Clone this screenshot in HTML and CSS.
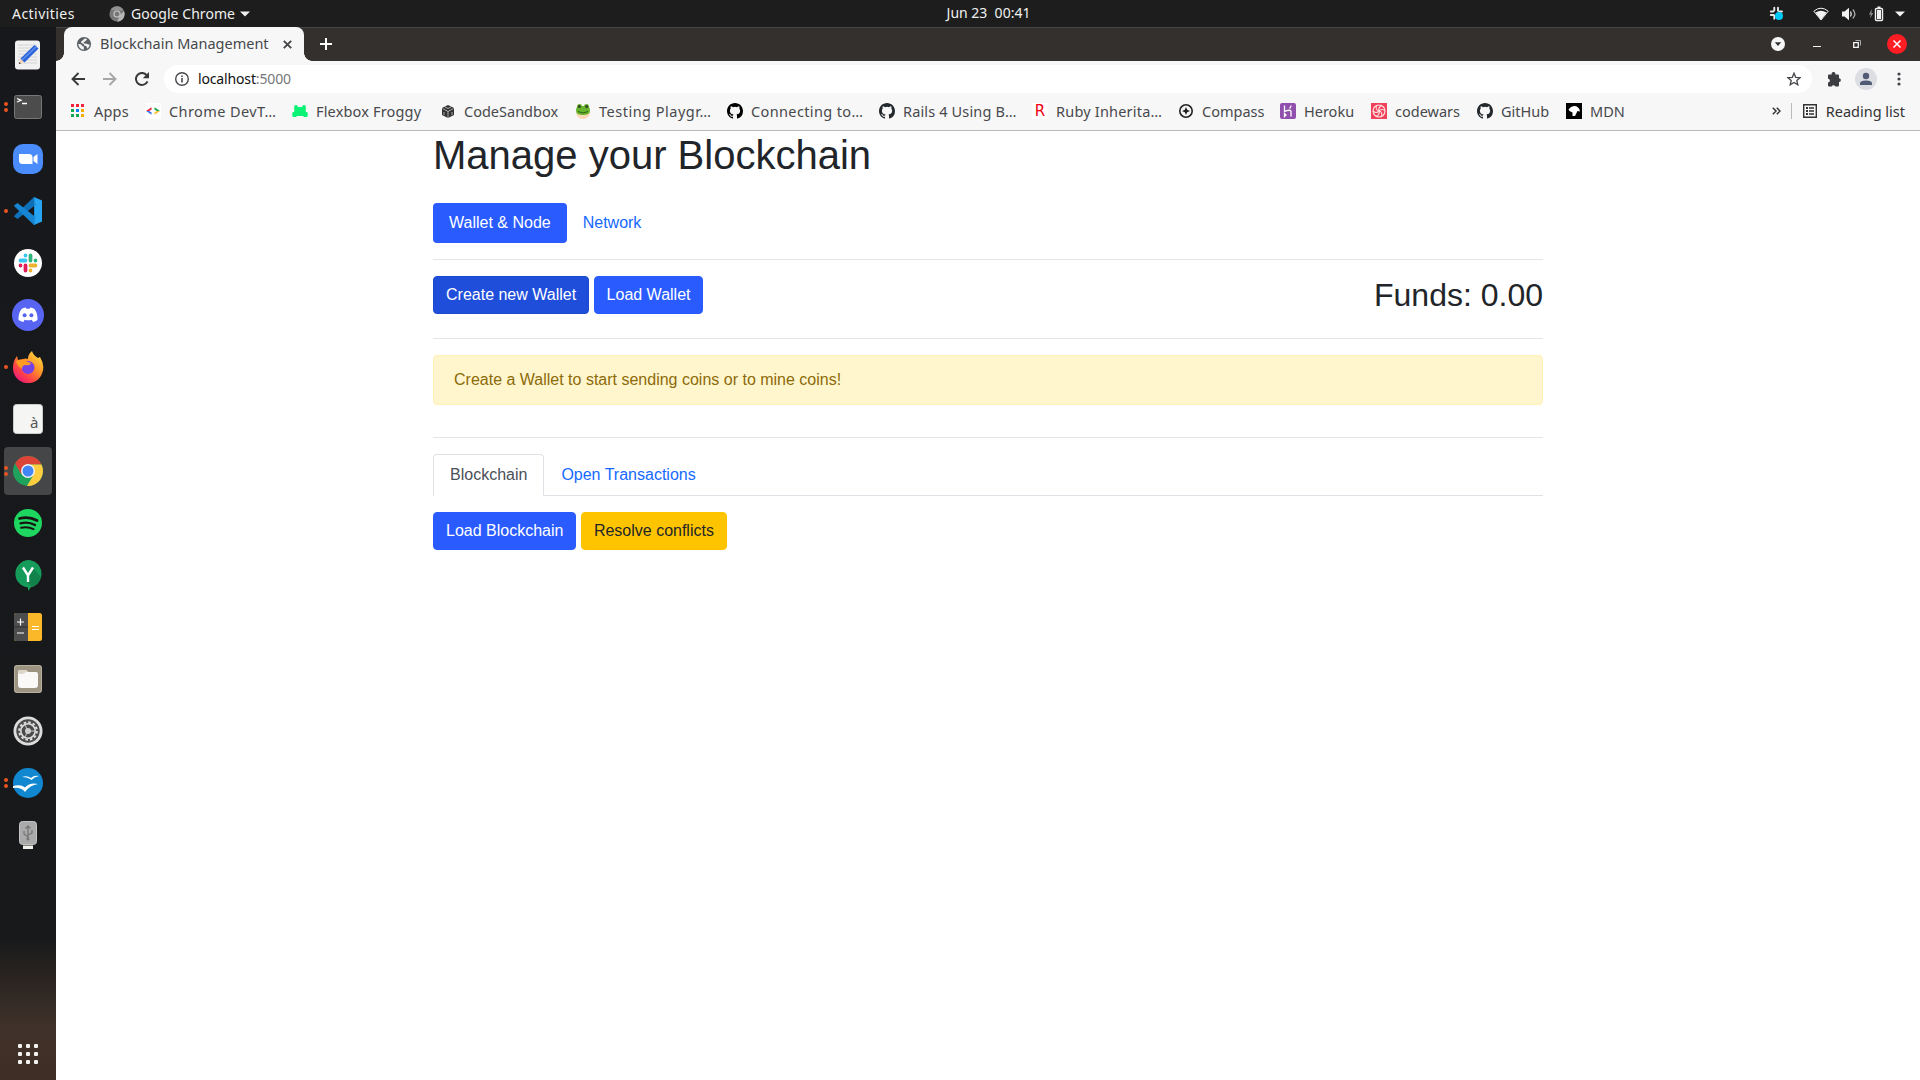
FILE: index.html
```html
<!DOCTYPE html>
<html lang="en">
<head>
<meta charset="utf-8">
<title>Blockchain Management</title>
<link rel="stylesheet" href="styles.css">
</head>
<body>
<svg width="0" height="0" class="defs">
  <symbol id="octocat" viewBox="0 0 16 16"><path d="M8 0C3.58 0 0 3.58 0 8c0 3.54 2.29 6.53 5.47 7.59.4.07.55-.17.55-.38 0-.19-.01-.82-.01-1.49-2.01.37-2.53-.49-2.69-.94-.09-.23-.48-.94-.82-1.13-.28-.15-.68-.52-.01-.53.63-.01 1.08.58 1.23.82.72 1.21 1.87.87 2.33.66.07-.52.28-.87.51-1.07-1.78-.2-3.64-.89-3.64-3.95 0-.87.31-1.59.82-2.15-.08-.2-.36-1.02.08-2.12 0 0 .67-.21 2.2.82a7.6 7.6 0 0 1 4 0c1.53-1.04 2.2-.82 2.2-.82.44 1.1.16 1.92.08 2.12.51.56.82 1.27.82 2.15 0 3.07-1.87 3.75-3.65 3.95.29.25.54.73.54 1.48 0 1.07-.01 1.93-.01 2.2 0 .21.15.46.55.38A8.01 8.01 0 0 0 16 8c0-4.42-3.58-8-8-8z"/></symbol>
</svg>
<header class="topbar">
  <span class="activities">Activities</span>
  <span class="appmenu">
    <svg width="16" height="16" viewBox="0 0 16 16"><circle cx="8" cy="8" r="7.6" fill="#777"/><path d="M1.5 4A7.6 7.6 0 0 1 14.8 4.600H8z" fill="#909090"/><path d="M15 5A7.600 7.600 0 0 1 8 15.600L11.200 9z" fill="#b5b5b5"/><circle cx="8" cy="8" r="3.600" fill="#ccc"/><circle cx="8" cy="8" r="2.500" fill="#777"/></svg>
    <span class="appname">Google Chrome</span>
    <svg width="10" height="6" viewBox="0 0 10 6"><path d="M0 .5h10L5 5.500z" fill="#f2f2f2"/></svg>
  </span>
  <span class="clock">Jun 23&nbsp; 00:41</span>
  <span class="tray">
    <svg class="t-slack" width="15" height="15" viewBox="0 0 15 15"><g stroke="#e8e8e8" stroke-width="1.900" stroke-linecap="round"><path d="M5.300 1.800v2.700M1.800 5.500h2.500M9 1.800v3M10.500 5.500H13M1.800 9h3M5.300 9.800v3"/></g><circle cx="10" cy="10" r="4" fill="#00c8f8"/></svg>
    <svg class="t-wifi" width="16" height="14" viewBox="0 0 16 14"><path d="M.8 4.200Q8-1.800 15.200 4.200L8 13z" fill="none" stroke="#f2f2f2"/><path d="M2.500 5.500Q8 2 13.500 5.500L8 13z" fill="#f2f2f2"/></svg>
    <svg class="t-vol" width="16" height="14" viewBox="0 0 16 14"><path d="M1 4.500h2.500L8 .8v12.400L3.500 9.500H1z" fill="#f2f2f2"/><path d="M9.500 4.500q1.600 2.500 0 5" stroke="#f2f2f2" stroke-width="1.300" fill="none"/><path d="M11.800 2.500q4.200 4.500 0 9" stroke="#aaa" stroke-width="1.300" fill="none"/></svg>
    <svg class="t-bat" width="15" height="16" viewBox="0 0 15 16"><path d="M2.800 3L0 8.500h1.800L1 12.500 4.300 7H2.500z" fill="#8a8a8a"/><rect x="6.500" y="2.500" width="7" height="12" rx="1" fill="none" stroke="#f2f2f2" stroke-width="1.400"/><path d="M8 4h4v9H8zM8.500 .5h3v2h-3z" fill="#f2f2f2"/></svg>
    <svg width="10" height="6" viewBox="0 0 10 6"><path d="M0 .5h10L5 5.500z" fill="#f2f2f2"/></svg>
  </span>
</header>
<div class="desktop">
<nav class="dock">
  <div class="app"><svg viewBox="0 0 32 32"><rect x="3" y="1.500" width="25" height="29" rx="3" fill="#f1f1f1"/><path d="M6 6h19M6 9h19M6 12h19M6 15h19M6 18h19M6 21h19M6 24h19" stroke="#d4d4d4"/><path d="M7 25l1.500-6 4 4z" fill="#f6d4b2"/><path d="M7 25l.5-2 1.400 1.400z" fill="#222"/><path d="M8.500 19.500L22.500 6l4 3.500L12.500 23.500z" fill="#2b63d9"/><path d="M10 21L24.500 7.500" stroke="#6390ee" stroke-width="1.500"/></svg></div>
  <div class="app two"><svg viewBox="0 0 32 32"><rect x="2.500" y="4.500" width="27" height="23" rx="2" fill="#4c4c4c" stroke="#777"/><path d="M5 7.500l4 1.800L5 11M10 12.500h5" stroke="#fff" stroke-width="1.300" fill="none"/></svg></div>
  <div class="app"><svg viewBox="0 0 32 32"><rect x="1" y="1" width="30" height="30" rx="10" fill="#4a8cfb"/><path d="M7 11h10q3.500 0 3.500 3.500V21h-10Q7 21 7 17.500zM21.500 14l4-3v10l-4-3z" fill="#fff"/></svg></div>
  <div class="app one"><svg viewBox="0 0 32 32"><path d="M22 2l8 3.500v21L22 30z" fill="#27a4f2"/><path d="M22 2L3 20l-1 1.500L5.500 24 23.500 10z" fill="#0e70b8"/><path d="M22 30L3 12l-1-1.500L5.500 8l18 14z" fill="#1685d2"/><path d="M22 2h1v28h-1z" fill="#1b8ed8"/></svg></div>
  <div class="app"><svg viewBox="0 0 32 32"><circle cx="16" cy="16" r="14" fill="#fff"/><g stroke-width="3.800" stroke-linecap="round" fill="none"><path d="M13.500 8.500v0M8.500 13.500h5" stroke="#36c5f0"/><path d="M18.500 8.500v5M23.500 13.500v0" stroke="#2eb67d"/><path d="M18.500 18.500h5M18.500 23.500v0" stroke="#ecb22e"/><path d="M13.500 18.500v5M8.500 18.500v0" stroke="#e01e5a"/></g></svg></div>
  <div class="app"><svg viewBox="0 0 32 32"><circle cx="16" cy="16" r="16" fill="#5865f2"/><path d="M9.500 10q2-1.300 4.200-1.500l.7 1.200h3.200l.7-1.200q2.200.2 4.200 1.500 3.500 5 3 11-2 1.600-4.500 2l-1.200-2.200q-3.600 1-7.200 0L11.400 23Q9 22.600 6.500 21 6 15 9.500 10z" fill="#fff"/><circle cx="12.600" cy="16.300" r="2" fill="#5865f2"/><circle cx="19.400" cy="16.300" r="2" fill="#5865f2"/></svg></div>
  <div class="app one"><svg viewBox="0 0 32 32"><defs><linearGradient id="fox" x1="1" y1="0" x2=".2" y2="1"><stop offset="0" stop-color="#fff04a"/><stop offset=".45" stop-color="#ff9328"/><stop offset=".75" stop-color="#ff4048"/><stop offset="1" stop-color="#ea1580"/></linearGradient></defs><path d="M20 0q1 4 6 7l2-1q5 8 2.500 15A15 15 0 0 1 1 17Q1 10 5 5l1 4 5-1q3-1 5 0 0-5 4-8z" fill="url(#fox)"/><circle cx="16" cy="16.500" r="6.500" fill="#7542e5"/><path d="M4 10q6-3 12 1l3 1q-1 3-5 2-4 0-4 4Q5 15 4 10z" fill="#ff9a24"/></svg></div>
  <div class="app"><svg viewBox="0 0 32 32"><rect x="1.500" y="1.500" width="29" height="29" rx="3" fill="#f5f5f4" stroke="#ccc"/><text x="18" y="25" class="glyph-a">à</text></svg></div>
  <div class="app two active"><svg viewBox="0 0 32 32"><circle cx="16" cy="16" r="15" fill="#1ea25c"/><path d="M3 8.500A15 15 0 0 1 29.500 9.500H16l-6.500 10z" fill="#dc4437"/><path d="M29.500 9.500A15 15 0 0 1 15 31l7-12-3-9.500z" fill="#ffcd40"/><circle cx="16" cy="16" r="7" fill="#f1f1f1"/><circle cx="16" cy="16" r="5.500" fill="#4285f4"/></svg></div>
  <div class="app"><svg viewBox="0 0 32 32"><circle cx="16" cy="16" r="14" fill="#1ed760"/><g fill="none" stroke="#191414" stroke-linecap="round"><path d="M7.500 11.500q9.500-2.500 17.500 2" stroke-width="2.800"/><path d="M8.500 16.300q8-2 14.500 1.800" stroke-width="2.300"/><path d="M9 20.700q7-1.500 12.500 1.500" stroke-width="1.900"/></g></svg></div>
  <div class="app"><svg viewBox="0 0 32 32"><path d="M16 1a13.800 13.800 0 0 1 3 27.200L16 32v-3.500A13.800 13.800 0 0 1 16 1z" fill="#169c5a"/><path d="M21 9l8 9q-2 7-9 10l-6-6z" fill="#11834a"/><path d="M11 8.500l5 8 5-8M16 16v7" stroke="#fff" stroke-width="2.400" fill="none"/></svg></div>
  <div class="app"><svg viewBox="0 0 32 32"><rect x="2" y="2" width="28" height="28" rx="2.500" fill="#fbb829"/><path d="M16 2v28H4.500Q2 30 2 27.500v-23Q2 2 4.500 2z" fill="#4d4d4d"/><path d="M2 16h14" stroke="#333"/><path d="M5 11h7M8.500 7.500v7M5 22h7M20 15.500h7M20 18.500h7" stroke="#fff" stroke-width="1.200"/></svg></div>
  <div class="app"><svg viewBox="0 0 32 32"><rect x="2" y="2" width="28" height="28" rx="3" fill="#9d9481"/><rect x="2.500" y="2.500" width="27" height="27" rx="3" fill="none" stroke="#bab29f"/><path d="M6 9q0-2 2-2h6l2 2h8q2 0 2 2v11q0 3-3 3H9q-3 0-3-3z" fill="#faf9f7"/><path d="M6.500 10.500q3 1 5 0l3-1.500H16l-2-2H8q-2 0-2 2z" fill="#ddd7c9"/></svg></div>
  <div class="app"><svg viewBox="0 0 32 32"><circle cx="16" cy="16" r="14.500" fill="#ddd"/><circle cx="16" cy="16" r="11.700" fill="#4a4a4a"/><circle cx="16" cy="16" r="8.800" fill="none" stroke="#ddd" stroke-width="2" stroke-dasharray="2.600 2"/><circle cx="16" cy="16" r="7.200" fill="none" stroke="#ddd" stroke-width="1.600"/><circle cx="16" cy="16" r="3" fill="#ccc"/><path d="M16 16l-3-6M16 16h6.500M16 16l-3 6" stroke="#ccc"/></svg></div>
  <div class="app two"><svg viewBox="0 0 32 32"><circle cx="16" cy="16" r="15" fill="#1187d0"/><path d="M10 10q5-2 9 1 3-3 8-2-5 1-7.500 4Q16 10 10 10zM1 19q8-2 12 1.500Q18 15 26 17q-8 1-13 8-4-5-12-4z" fill="#fff"/></svg></div>
  <div class="app"><svg viewBox="0 0 32 32"><rect x="7.500" y="2.500" width="17" height="23" rx="3" fill="#aaa" stroke="#c4c4c4"/><path d="M11 26.500h10V30H11z" fill="#f0f0ec"/><path d="M16 20V8M13.500 9.500L16 7l2.500 2.500M16 18l-4-3v-3M16 16l4-2v-3" stroke="#777" stroke-width="1.300" fill="none"/><circle cx="16" cy="20" r="1.600" fill="#777"/></svg></div>
  <div class="launcher"><i></i><i></i><i></i><i></i><i></i><i></i><i></i><i></i><i></i></div>
</nav>
<main class="browser">
  <div class="titlebar">
    <div class="tab">
      <svg width="16" height="16" viewBox="0 0 16 16"><circle cx="8" cy="8" r="7.100" fill="#5c6066"/><path d="M2.200 8l2.500.2q1.300.5 1.300 1.800l1.800.6v3.100Q2.800 13.200 2.200 8zM8.500 2.500l2.500.6q-.2 1.500-1.500 1.700-.3 1.200-1.800 1.300-.5 1.300.5 1.500l2.800.2q.8 1.200 2 .6l.8.200q-.6 2.800-2.300 4-.6-.1-.7-1.700-.4-1.200-2-1.200-1-.4-1-1.500L5 6.500q0-1.500 1.600-1.900z" fill="#f3f3f3"/></svg>
      <span class="tab-title">Blockchain Management</span>
      <svg width="9" height="9" viewBox="0 0 9 9"><path d="M.8.800l7.400 7.400M8.200.800L.8 8.200" stroke="#45474a" stroke-width="1.900"/></svg>
    </div>
    <svg class="plus" width="12" height="12" viewBox="0 0 12 12"><path d="M6 0v12M0 6h12" stroke="#fff" stroke-width="2"/></svg>
    <div class="winctl">
      <svg width="14" height="14" viewBox="0 0 14 14"><circle cx="7" cy="7" r="7" fill="#f7f7f7"/><path d="M3.800 5.200h6.400L7 9z" fill="#33302e"/></svg>
      <svg width="8" height="14" viewBox="0 0 8 14"><path d="M0 9.500h8" stroke="#f5f5f5"/></svg>
      <svg width="8" height="8" viewBox="0 0 8 8"><path d="M.7 2.700h4.600v4.600H.7z" stroke="#f5f5f5" stroke-width="1.300" fill="none"/><path d="M2.500.5h5v5" stroke="#aaa" fill="none"/></svg>
      <svg width="20" height="20" viewBox="0 0 20 20"><circle cx="10" cy="10" r="10" fill="#ff1d24"/><path d="M6.500 6.500l7 7M13.500 6.500l-7 7" stroke="#fff" stroke-width="1.500"/></svg>
    </div>
  </div>
  <div class="toolbar">
    <svg width="14" height="14" viewBox="0 0 14 14"><path d="M14 7H1.500M7.500 1L1.500 7l6 6" stroke="#38393b" stroke-width="1.900" fill="none"/></svg>
    <svg width="14" height="14" viewBox="0 0 14 14"><path d="M0 7h12.500M6.500 1l6 6-6 6" stroke="#a5a6a8" stroke-width="1.900" fill="none"/></svg>
    <svg width="14" height="14" viewBox="0 0 14 14"><path d="M12.500 9.300A6 6 0 1 1 11.500 3" stroke="#38393b" stroke-width="2" fill="none"/><path d="M14 0v6.200H7.800z" fill="#38393b"/></svg>
    <div class="omnibox">
      <svg width="14" height="14" viewBox="0 0 14 14"><circle cx="7" cy="7" r="6.300" stroke="#48494c" stroke-width="1.400" fill="none"/><path d="M6.200 6h1.600v4.500H6.200zM6.200 3.500h1.600v1.500H6.200z" fill="#48494c"/></svg>
      <span class="url">localhost<em>:5000</em></span>
      <svg width="14" height="14" viewBox="0 0 14 14"><path d="M7 1.200l1.700 4.100 4.500.3-3.400 2.900 1 4.300L7 10.500l-3.800 2.300 1-4.300L.8 5.600l4.500-.3z" stroke="#45464a" stroke-width="1.300" fill="none"/></svg>
    </div>
    <svg class="puzzle" width="15" height="15" viewBox="0 0 15 15"><path d="M1 3.500Q1 2.500 2 2.500h2.700a1.900 1.900 0 1 1 3.600 0H11q1 0 1 1v2.700a1.900 1.900 0 1 1 0 3.800v3q0 1.500-1 1.500H8.300a1.900 1.900 0 0 0-3.600 0H2q-1 0-1-1v-3a1.900 1.900 0 0 0 0-3.800z" fill="#3c3d40"/></svg>
    <svg class="avatar" width="22" height="22" viewBox="0 0 22 22"><circle cx="11" cy="11" r="11" fill="#dddee4"/><circle cx="11" cy="8" r="3.200" fill="#515b73"/><path d="M5 17v-1.500q0-3 6-3t6 3V17z" fill="#515b73"/></svg>
    <svg class="kebab" width="4" height="14" viewBox="0 0 4 14"><g fill="#45464a"><circle cx="2" cy="2" r="1.600"/><circle cx="2" cy="7" r="1.600"/><circle cx="2" cy="12" r="1.600"/></g></svg>
  </div>
  <div class="bookmarks">
    <span class="bm w-apps"><svg viewBox="0 0 16 16"><path d="M1 1h3v3H1zM6 1h3v3H6zM11 1h3v3h-3z" fill="#f3233c"/><path d="M1 6h3v3H1zM1 11h3v3H1z" fill="#14a752"/><path d="M6 6h3v3H6z" fill="#1680f5"/><path d="M11 6h3v3h-3zM6 11h3v3H6zM11 11h3v3h-3z" fill="#f7aa00"/><path d="M6 11h3v3H6z" fill="#14a752"/></svg>Apps</span>
    <span class="bm w-dev"><svg viewBox="0 0 16 16"><rect width="16" height="16" rx="2" fill="#fff"/><path d="M6.500 4.200v2.600L4 8 1 8z" fill="#f3233c"/><path d="M1 8h3l2.500 1.200v2.600z" fill="#3b78f5"/><path d="M9.500 4.200v2.600L12 8h3z" fill="#14a752"/><path d="M15 8h-3L9.500 9.200v2.600z" fill="#fbc02d"/></svg>Chrome DevT…</span>
    <span class="bm w-frog"><svg viewBox="0 0 16 16"><g fill="#0cf277"><circle cx="4" cy="4" r="1.900"/><circle cx="12" cy="4" r="1.900"/><rect x="2.200" y="4" width="11.600" height="9" rx="1.500"/><rect x=".3" y="9" width="4.500" height="5" rx="1.200"/><rect x="11.200" y="9" width="4.500" height="5" rx="1.200"/></g></svg>Flexbox Froggy</span>
    <span class="bm w-csb"><svg viewBox="0 0 16 16"><path d="M8 2l6 3v7l-6 3-6-3V5z" fill="#333"/><path d="M2.500 5.500L8 8.500l5.500-3M8 8.500V15M5 4l3 1.500L11 4M4 9v3M12 9v3" stroke="#ccc" stroke-width=".8" fill="none"/></svg>CodeSandbox</span>
    <span class="bm w-test"><svg viewBox="0 0 16 16"><path d="M1 10h14q-1.500 6-7 6t-7-6z" fill="#fbd9b8"/><path d="M1 8q0-3 1-4 0-3 2.500-3T7 3h2q0-2 2.500-2T14 4q1 1 1 4 0 4-7 4T1 8z" fill="#66b52c"/><circle cx="4.300" cy="3.500" r="1.500" fill="#342"/><circle cx="11.700" cy="3.500" r="1.500" fill="#342"/><path d="M3 8.500q5 3 10 0" stroke="#345d18" fill="none"/></svg>Testing Playgr…</span>
    <span class="bm w-conn"><svg><use href="#octocat"/></svg>Connecting to…</span>
    <span class="bm w-rails slate"><svg><use href="#octocat"/></svg>Rails 4 Using B…</span>
    <span class="bm w-ruby"><span class="ruby-icon">R</span>Ruby Inherita…</span>
    <span class="bm w-comp"><svg viewBox="0 0 16 16"><circle cx="8" cy="8" r="6.200" fill="none" stroke="#222" stroke-width="1.600"/><path d="M8 4l1.200 2.800L12 8 9.200 9.200 8 12 6.800 9.200 4 8l2.800-1.200z" fill="#222"/></svg>Compass</span>
    <span class="bm w-hero"><svg viewBox="0 0 16 16"><rect width="16" height="16" rx="2" fill="#9150ad"/><path d="M4.500 2.500v6q6.500-2.500 6.500 0v5M4.500 10.500v3l1.500-1.500zM11 2.500q0 1.500-1.500 3" stroke="#fff" stroke-width="1.300" fill="none"/></svg>Heroku</span>
    <span class="bm w-wars"><svg viewBox="0 0 16 16"><rect width="16" height="16" fill="#f0415a"/><g fill="none" stroke="#ffe3e3" stroke-width="1.100"><circle cx="8" cy="8" r="6"/><path d="M8 8Q7 4 11 2.500M8 8q3-3 6 0M8 8q4 1 2.500 5.500M8 8q1 4-3 5.500M8 8q-3 3-6 0M8 8Q4 7 5.500 2.500"/></g></svg>codewars</span>
    <span class="bm w-gh slate"><svg><use href="#octocat"/></svg>GitHub</span>
    <span class="bm w-mdn"><svg viewBox="0 0 16 16"><rect width="16" height="16" fill="#000"/><path d="M2.500 6.500L5 4l3-1q5 0 6 5.500l-2.500-.5-1 2L9 13H6.500V9.500L3.500 8z" fill="#fff"/></svg>MDN</span>
    <svg class="more" width="9" height="8" viewBox="0 0 9 8"><path d="M.8.800L4 4 .8 7.200M4.800.800L8 4 4.800 7.200" stroke="#333" stroke-width="1.500" fill="none"/></svg>
    <span class="reading"><svg width="14" height="14" viewBox="0 0 14 14"><path d="M.7.700h12.600v12.600H.7z" stroke="#333" stroke-width="1.400" fill="none"/><path d="M3 3h2v2H3zM3 6h2v2H3zM3 9h2v2H3zM6 3.300h5v1.400H6zM6 6.300h5v1.400H6zM6 9.300h5v1.400H6z" fill="#333"/></svg>Reading list</span>
  </div>
  <section class="page">
    <div class="container">
      <h1>Manage your Blockchain</h1>
      <div class="pills"><a class="pill on">Wallet &amp; Node</a><a class="pill">Network</a></div>
      <hr>
      <div class="row">
        <div><button class="btn pressed">Create new Wallet</button> <button class="btn">Load Wallet</button></div>
        <h2>Funds: 0.00</h2>
      </div>
      <hr>
      <div class="alert">Create a Wallet to start sending coins or to mine coins!</div>
      <hr>
      <div class="tabs"><a class="navtab on">Blockchain</a><a class="navtab">Open Transactions</a></div>
      <div><button class="btn">Load Blockchain</button> <button class="btn warning">Resolve conflicts</button></div>
    </div>
  </section>
</main>
</div>
</body>
</html>
```
FILE: styles.css
```css
* { box-sizing: border-box; }
body { margin: 0; height: 1080px; overflow: hidden; display: flex; flex-direction: column; font: 14.5px/20px "Noto Sans", sans-serif; background: #fff; }
svg { display: block; flex: none; }
.defs { position: absolute; }

/* System bar */
.topbar { height: 27px; flex: none; background: #1d1d1d; color: #f0f0f0; display: grid; grid-template-columns: 1fr auto 1fr; grid-template-rows: 27px; align-items: center; padding: 0 15px 0 12px; font-size: 14px; }
.topbar > * { grid-row: 1; }
.activities { grid-column: 1; letter-spacing: .45px; }
.appmenu { grid-column: 1; margin-left: 97px; display: flex; align-items: center; }
.appname { margin: 0 5px 0 6px; width: 104px; white-space: nowrap; letter-spacing: .05px; }
.clock { grid-column: 2; font-size: 14px; margin: -1px 0 0 60px; }
.tray { grid-column: 3; display: flex; align-items: center; justify-content: flex-end; }
.t-slack { margin-right: 29px; }
.t-wifi { margin-right: 12px; }
.t-vol { margin-right: 12px; }
.t-bat { margin-right: 11px; }

.desktop { flex: 1; display: flex; min-height: 0; }

/* Dock */
.dock { width: 56px; flex: none; padding: 4px 4px 0; display: flex; flex-direction: column; gap: 4px; background: linear-gradient(#17181b 0, #18191b 910px, #302823 965px, #40312a 1000px, #3e2e25 100%); }
.app { position: relative; width: 48px; height: 48px; border-radius: 4px; display: flex; align-items: center; justify-content: center; }
.app svg { width: 32px; height: 32px; }
.app.active { background: #454648; }
.app.one::before, .app.two::before { content: ""; position: absolute; left: 0; width: 4px; height: 4px; border-radius: 50%; background: #e95420; top: 22px; }
.app.two::before { top: 19px; box-shadow: 0 6px #e95420; }
.glyph-a { font: 15px "Noto Sans", sans-serif; fill: #555; }
.launcher { margin: auto auto 16px; display: grid; grid-template-columns: repeat(3, 4px); gap: 4px; }
.launcher i { width: 4px; height: 4px; border-radius: 1px; background: #f2f2f0; }

/* Window frame */
.browser { flex: 1; min-width: 0; display: flex; flex-direction: column; }
.titlebar { height: 34px; flex: none; padding-left: 8px; display: flex; align-items: center; background: #33302e; border-top: 1px solid #474543; }
.tab { position: relative; width: 240px; height: 34px; margin-top: -1px; padding: 0 12px; display: flex; align-items: center; background: #f7f7f7; border-radius: 8px 8px 0 0; color: #46484b; }
.tab::before, .tab::after { content: ""; position: absolute; bottom: 0; width: 8px; height: 8px; }
.tab::before { left: -8px; background: radial-gradient(circle at 0 0, #33302e 7.500px, #f7f7f7 8px); }
.tab::after { right: -8px; background: radial-gradient(circle at 100% 0, #33302e 7.500px, #f7f7f7 8px); }
.tab-title { width: 183px; margin: -2px 0 0 8px; white-space: nowrap; flex: none; }
.plus { margin: -1px 0 0 16px; }
.winctl { margin: -1px 13px 0 auto; display: flex; align-items: center; gap: 29px; }
.winctl svg:nth-child(2) { margin-left: -1px; }
.winctl svg:nth-child(3) { margin-left: 3px; }
.winctl svg:nth-child(4) { margin-left: -3px; }

.toolbar { height: 36px; flex: none; display: flex; align-items: center; gap: 18px; padding: 0 19px 0 15px; background: #f7f7f7; }
.omnibox { flex: 1; height: 28px; margin-left: -3px; border-radius: 14px; background: #fff; display: flex; align-items: center; padding: 0 11px; color: #111; }
.url { flex: 1; margin: -1px 0 0 9px; font-size: 14px; letter-spacing: -.15px; }
.url em { font-style: normal; color: #777; }
.puzzle { margin-left: -3px; }
.avatar { margin: 0 2px 0 -5px; }

.bookmarks { height: 34px; flex: none; display: flex; align-items: center; padding: 0 15px 5px 14px; background: #f7f7f7; border-bottom: 1px solid #bbb; color: #47494c; }
.bm { display: flex; align-items: center; gap: 8px; white-space: nowrap; flex: none; }
.bm svg { width: 16px; height: 16px; fill: #000; }
.slate svg { fill: #24292e; }
.w-apps { width: 75px; letter-spacing: .2px; }
.w-dev { width: 147px; letter-spacing: .4px; }
.w-frog { width: 148px; letter-spacing: .17px; }
.w-csb { width: 135px; }
.w-test { width: 152px; letter-spacing: .5px; }
.w-conn { width: 152px; letter-spacing: .37px; }
.w-rails { width: 153px; letter-spacing: .15px; }
.w-ruby { width: 146px; letter-spacing: .2px; }
.w-comp { width: 102px; }
.w-hero { width: 91px; }
.w-wars { width: 106px; }
.w-gh { width: 89px; }
.w-mdn { width: 80px; }
.ruby-icon { width: 16px; height: 16px; background: #fff; font: 15px/16px "DejaVu Sans", sans-serif; color: #f00010; text-align: center; }
.more { margin-left: auto; }
.reading { margin-left: 10px; height: 16px; border-left: 1px solid #bbb; padding-left: 11px; display: flex; align-items: center; gap: 9px; color: #333; white-space: nowrap; }

/* Page */
.page { flex: 1; font: 16px/24px "Liberation Sans", Arial, sans-serif; color: #212529; background: #fff; }
.container { width: 1140px; margin: 0 auto; padding: 0 15px; }
h1, h2 { margin: 0 0 8px; font-weight: 500; line-height: 1.2; }
h1 { font-size: 40px; margin-bottom: 24px; }
h2 { font-size: 32px; }
hr { border: 0; border-top: 1px solid rgba(0,0,0,.1); margin: 16px 0; }
.pills, .tabs, .row { display: flex; }
.row { justify-content: space-between; }
.pill { padding: 8px 16px; border-radius: 4px; color: #1569ff; }
.pill.on { background: #295bff; color: #fff; }
.btn { font: inherit; color: #fff; background: #295bff; border: 1px solid #295bff; border-radius: 4px; padding: 6px 12px; }
.btn.pressed { background: #1f4edb; border-color: #1d49ce; }
.btn.warning { background: #ffc400; border-color: #ffc400; color: #212529; }
.alert { padding: 12px 20px; border: 1px solid #fff0b5; border-radius: 4px; background: #fff6ce; color: #8c6a08; margin-bottom: 32px; }
.tabs { border-bottom: 1px solid #dee2e6; margin-bottom: 16px; }
.navtab { padding: 8px 16px; border: 1px solid transparent; border-radius: 4px 4px 0 0; margin-bottom: -1px; color: #1569ff; }
.navtab.on { color: #495057; background: #fff; border-color: #dee2e6 #dee2e6 #fff; }
```
